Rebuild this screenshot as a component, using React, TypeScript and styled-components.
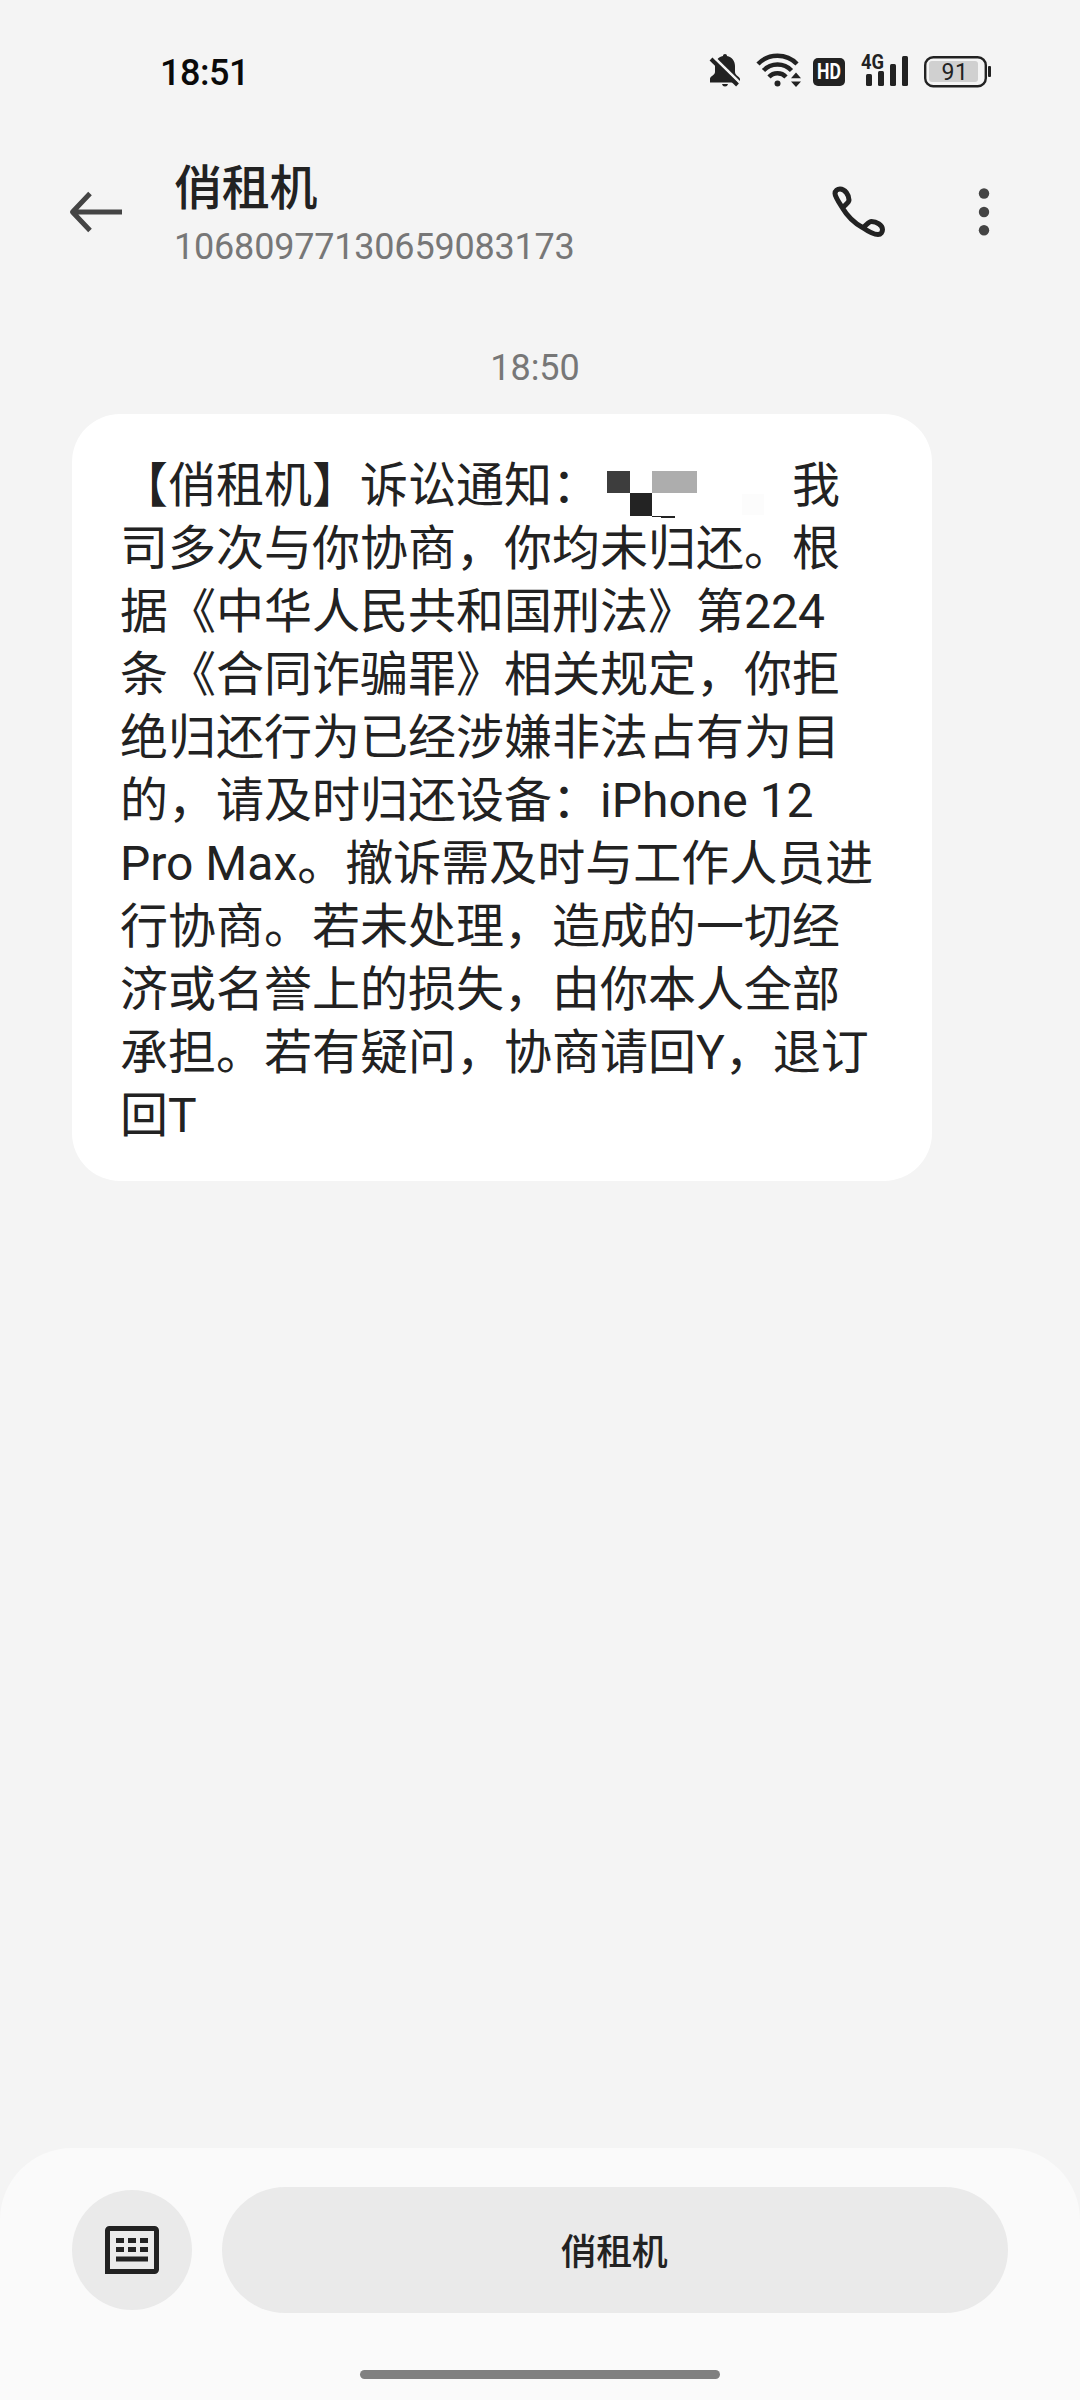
import React from "react";
import styled, { createGlobalStyle } from "styled-components";

const GlobalStyle = createGlobalStyle`
  html, body {
    margin: 0;
    padding: 0;
    background: #f4f4f4;
  }
  * { box-sizing: border-box; }
`;

const Screen = styled.div`
  width: 1080px;
  height: 2400px;
  display: flex;
  flex-direction: column;
  overflow: hidden;
  background: #f4f4f4;
  color: #222;
  font-family: Roboto, "Noto Sans CJK SC", sans-serif;
`;

const StatusBar = styled.header`
  height: 144px;
  padding: 51px 88px 0 160px;
  display: flex;
  align-items: flex-start;
  justify-content: space-between;
`;

const Clock = styled.time`
  padding-top: 1px;
  font-size: 36px;
  line-height: 42px;
  font-weight: 500;
  letter-spacing: -0.5px;
  color: #0a0a0a;
`;

const StatusIcons = styled.div`
  display: flex;
  align-items: flex-start;
`;

const StatusGlyph = styled.svg<{ $gap?: number }>`
  display: block;
  height: 40px;
  margin-left: ${(p) => p.$gap ?? 0}px;
  font-family: Roboto, sans-serif;
`;

const HdBadge = styled.span`
  width: 32px;
  height: 28px;
  margin: 7px 0 0 11px;
  border-radius: 5px;
  background: #222;
  color: #fff;
  display: flex;
  align-items: center;
  justify-content: center;
  font-size: 22px;
  line-height: 28px;
  font-weight: 700;
`;

const HdText = styled.span`
  transform: scaleX(0.8);
`;

const TitleBar = styled.nav`
  height: 136px;
  padding: 0 90px 0 68px;
  display: flex;
  align-items: center;
`;

const IconButton = styled.button<{ $ml?: number }>`
  display: flex;
  padding: 0;
  border: 0;
  background: none;
  margin-left: ${(p) => p.$ml ?? 0}px;
`;

const Contact = styled.div`
  flex: 1;
  margin-left: 48px;
  padding-top: 7px;
  display: flex;
  flex-direction: column;
`;

const ContactName = styled.h1`
  margin: 0;
  font-size: 48px;
  line-height: 64px;
  font-weight: 500;
  letter-spacing: -0.3px;
  color: #222;
`;

const ContactNumber = styled.span`
  font-size: 36px;
  line-height: 53px;
  letter-spacing: -0.2px;
  color: #777;
`;

const Thread = styled.main`
  flex: 1;
  padding: 67px 0 0 72px;
  display: flex;
  flex-direction: column;
  align-items: flex-start;
`;

const Stamp = styled.time`
  width: 926px;
  height: 67px;
  font-size: 36px;
  line-height: 42px;
  text-align: center;
  color: #777;
`;

const Bubble = styled.article`
  width: 860px;
  height: 767px;
  padding: 40px 48px 0;
  border-radius: 48px;
  background: #fff;
`;

const Line = styled.p`
  margin: 0;
  height: 63px;
  display: flex;
  font-size: 48px;
  line-height: 63px;
  white-space: pre;
  color: #222;
`;

const Mosaic = styled.svg`
  display: block;
  width: 192px;
  height: 66px;
`;

const Dock = styled.footer`
  height: 252px;
  padding: 39px 72px 0;
  border-radius: 72px 72px 0 0;
  background: #fafafa;
  display: flex;
  flex-direction: column;
  align-items: center;
`;

const DockRow = styled.div`
  width: 100%;
  display: flex;
  align-items: center;
  gap: 30px;
`;

const RoundButton = styled.button`
  width: 120px;
  height: 120px;
  padding: 0;
  border: 0;
  border-radius: 50%;
  background: #eaeaea;
  display: flex;
  align-items: center;
  justify-content: center;
`;

const MenuPill = styled.button`
  flex: 1;
  height: 126px;
  padding: 5px 2px 0 0;
  border: 0;
  border-radius: 63px;
  background: #eaeaea;
  color: #222;
  font: 500 36px/50px Roboto, "Noto Sans CJK SC", sans-serif;
  letter-spacing: -0.3px;
`;

const HomeHandle = styled.div`
  width: 360px;
  height: 9px;
  margin-top: 57px;
  border-radius: 5px;
  background: #808080;
`;

const REST = [
  "司多次与你协商，你均未归还。根",
  "据《中华人民共和国刑法》第224",
  "条《合同诈骗罪》相关规定，你拒",
  "绝归还行为已经涉嫌非法占有为目",
  "的，请及时归还设备：iPhone 12",
  "Pro Max。撤诉需及时与工作人员进",
  "行协商。若未处理，造成的一切经",
  "济或名誉上的损失，由你本人全部",
  "承担。若有疑问，协商请回Y，退订",
  "回T",
];

const INK = "#222";

function MutedBell() {
  return (
    <StatusGlyph width="32" viewBox="0 0 32 40" fill={INK}>
      <path d="M16 3c-1.300 0-2 .8-2 2C9 6 6 10 6 15v6c0 3-4.500 4-5 6.500V31.500h30V28c0-2-5-3.500-5-7v-6c0-5-3-9-8-10 0-1.200-.7-2-2-2z" />
      <path d="M13 33h6c-.4 1.700-1.500 2.500-3 2.500s-2.600-.8-3-2.500z" />
      <path d="M5 6.500 31 32" stroke="#f4f4f4" strokeWidth="3" />
      <path d="M2 8 28.500 34" stroke={INK} strokeWidth="4" />
    </StatusGlyph>
  );
}

function Wifi() {
  return (
    <StatusGlyph width="46" viewBox="0 0 46 40" $gap={15}>
      <g fill="none" stroke={INK} strokeWidth="4.400">
        <path d="M2 13c10.500-11 28.500-11 39 0" />
        <path d="M7.500 19.500c7.500-8 20.500-8 28 0" />
        <path d="M13 26c4.500-5 12.500-5 17 0" />
      </g>
      <circle cx="21.500" cy="32.500" r="3" fill={INK} />
      <path d="M33.500 32V24l5-5 6 5v6z" fill="#f4f4f4" />
      <path d="M35 27.300 40 21.500 45 27.300zM35 30.500h10L40 36z" fill={INK} />
    </StatusGlyph>
  );
}

function Signal() {
  return (
    <StatusGlyph width="48" viewBox="0 0 48 40" $gap={16} fill={INK}>
      <text x="0" y="18" fontSize="20" fontWeight="700" textLength="23" lengthAdjust="spacingAndGlyphs">
        4G
      </text>
      <rect x="5" y="23" width="6" height="12" rx="1.500" />
      <rect x="17" y="20" width="6" height="15" rx="1.500" />
      <rect x="29" y="13" width="6" height="22" rx="1.500" />
      <rect x="41" y="5" width="6" height="30" rx="1.500" />
    </StatusGlyph>
  );
}

function Battery() {
  return (
    <StatusGlyph width="68" viewBox="0 0 68 40" $gap={15} fill={INK}>
      <rect x="1.200" y="6.200" width="60.600" height="29" rx="8" fill="none" stroke={INK} strokeWidth="2.400" />
      <rect x="5" y="10" width="49" height="21" rx="3" fill="#d0d0d0" />
      <rect x="64" y="15" width="3" height="11" rx="1" />
      <text x="31" y="29" textAnchor="middle" fontSize="23" fontWeight="400" letterSpacing="0.5">
        91
      </text>
    </StatusGlyph>
  );
}

export default function App() {
  return (
    <>
      <GlobalStyle />
      <Screen lang="zh-CN">
        <StatusBar>
          <Clock>18:51</Clock>
          <StatusIcons>
            <MutedBell />
            <Wifi />
            <HdBadge>
              <HdText>HD</HdText>
            </HdBadge>
            <Signal />
            <Battery />
          </StatusIcons>
        </StatusBar>

        <TitleBar>
          <IconButton aria-label="返回">
            <svg width="58" height="46" viewBox="0 0 58 46" fill="none" stroke="#444" strokeWidth="5">
              <path d="M5 23h49M22 4.500 4.500 23 22 41.500" strokeLinejoin="round" />
            </svg>
          </IconButton>
          <Contact>
            <ContactName>俏租机</ContactName>
            <ContactNumber>10680977130659083173</ContactNumber>
          </Contact>
          <IconButton aria-label="拨打电话">
            <svg width="56" height="56" viewBox="0 0 56 56" fill="none" stroke={INK} strokeWidth="5" strokeLinejoin="round">
              <path d="M12.500 24C8 17 5 12.500 5 9.500c0-2.800 2.500-4.500 5-4.500 5 0 9 6 9 11 0 3-4.500 5-6.500 8 5 8.500 11 14.500 20 19.500 6.500 4.500 12.500 7 15.500 7s4.500-2.500 4.500-5c0-4.500-6-8-11-8-3.500 0-5 4.500-9 6" />
            </svg>
          </IconButton>
          <IconButton aria-label="更多" $ml={92}>
            <svg width="12" height="48" viewBox="0 0 12 48" fill="#444">
              <circle cx="6" cy="5.500" r="5.200" />
              <circle cx="6" cy="24" r="5.200" />
              <circle cx="6" cy="42.300" r="5.200" />
            </svg>
          </IconButton>
        </TitleBar>

        <Thread>
          <Stamp>18:50</Stamp>
          <Bubble>
            <Line>
              【俏租机】诉讼通知：
              <Mosaic viewBox="0 0 192 66" shapeRendering="crispEdges">
                <rect x="7" y="17" width="23" height="22" fill="#3d3d3d" />
                <rect x="30" y="39" width="22" height="23" fill="#232323" />
                <rect x="52" y="17" width="45" height="22" fill="#adadad" />
                <rect x="52" y="62" width="10" height="1" fill="#232323" />
                <rect x="61" y="62" width="14" height="2" fill="#232323" />
                <rect x="142" y="40" width="22" height="21" fill="#fcfcfc" />
              </Mosaic>
              我
            </Line>
            {REST.map((t) => (
              <Line key={t}>{t}</Line>
            ))}
          </Bubble>
        </Thread>

        <Dock>
          <DockRow>
            <RoundButton aria-label="键盘">
              <svg width="54" height="48" viewBox="0 0 54 48" fill={INK}>
                <path d="M2.500 45.500v-41a2 2 0 0 1 2-2h45a2 2 0 0 1 2 2v39a2 2 0 0 1-2 2z" fill="none" stroke={INK} strokeWidth="5" />
                <path d="M11 12h8v5h-8zM23 12h8v5h-8zM35 12h8v5h-8zM11 21h8v5h-8zM23 21h8v5h-8zM35 21h8v5h-8zM11 30.500h32v5H11z" />
              </svg>
            </RoundButton>
            <MenuPill>俏租机</MenuPill>
          </DockRow>
          <HomeHandle />
        </Dock>
      </Screen>
    </>
  );
}
